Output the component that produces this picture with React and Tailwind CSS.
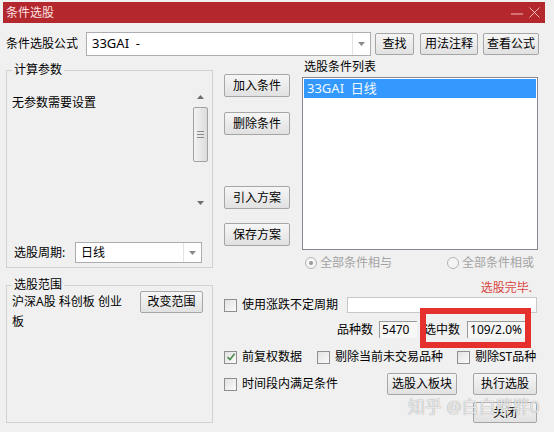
import React from 'react';

const Btn = ({ children, className = '' }) => (
  <button
    className={`flex items-center justify-center rounded-[2px] border border-[#a6a6a6] bg-gradient-to-b from-[#f6f6f6] to-[#e1e1e1] text-[12px] leading-none text-black ${className}`}
  >
    {children}
  </button>
);

const Check = ({ checked }) => (
  <span className="flex h-[13px] w-[13px] shrink-0 items-center justify-center border border-[#8f8f8f] bg-gradient-to-br from-[#e2e2e2] to-[#fbfbfb]">
    {checked && (
      <svg width="10" height="10" viewBox="0 0 10 10">
        <path d="M1.5 5.2 L4 7.6 L8.6 1.8" fill="none" stroke="#4b8a4b" strokeWidth="1.6" />
      </svg>
    )}
  </span>
);

const Radio = ({ on }) => (
  <span className="flex h-[12px] w-[12px] items-center justify-center rounded-full border border-[#b4b4b4] bg-[#f4f4f4]">
    {on && <span className="h-[4px] w-[4px] rounded-full bg-[#9a9a9a]" />}
  </span>
);

const Arrow = () => (
  <svg width="7" height="4" viewBox="0 0 7 4">
    <path d="M0 0 H7 L3.5 4 Z" fill="#8a8a8a" />
  </svg>
);

function App() {
  return (
    <div className="relative h-[432px] w-[554px] overflow-hidden bg-[#f0f0f0] font-['Noto_Sans','Noto_Sans_CJK_SC',sans-serif] text-[12px] text-black">
      {/* title bar */}
      <div className="ml-[3px] mt-[2px] flex h-[21px] w-[542px] items-center justify-between bg-[#b3272d] pl-[3px] pr-[5px] text-[#fbe3e3]">
        <span className="leading-none">条件选股</span>
        <div className="flex items-center gap-[6px]">
          <svg width="12" height="12" viewBox="0 0 12 12">
            <path d="M0 7 H12" stroke="#f3bcbc" strokeWidth="1" />
          </svg>
          <svg width="11" height="11" viewBox="0 0 11 11">
            <path d="M0.5 0.5 L10.5 10.5 M10.5 0.5 L0.5 10.5" stroke="#f3bcbc" strokeWidth="1" />
          </svg>
        </div>
      </div>

      {/* formula row */}
      <div className="mt-[9px] flex h-[24px] items-center">
        <span className="w-[86px] pl-[6px]">条件选股公式</span>
        <div className="flex h-[24px] w-[285px] items-center border border-[#abadb3] bg-white">
          <span className="flex-1 pl-[5px] text-[13px]">33GAI&nbsp;&nbsp;-</span>
          <span className="flex h-full w-[18px] items-center justify-center border-l border-[#e3e3e3]">
            <Arrow />
          </span>
        </div>
        <Btn className="ml-[4px] h-[22px] w-[39px]">查找</Btn>
        <Btn className="ml-[6px] h-[22px] w-[58px]">用法注释</Btn>
        <Btn className="ml-[5px] h-[22px] w-[56px]">查看公式</Btn>
      </div>

      <div className="mt-[4px] flex">
        {/* left column */}
        <div className="ml-[6px] w-[207px] pt-[3px]">
          <fieldset className="flex h-[205px] flex-col border border-[#d2d2d2]">
            <legend className="ml-[5px] px-[2px] leading-[14px]">计算参数</legend>
            <div className="mt-[11px] flex h-[122px]">
              <div className="flex-1 pl-[5px] pt-[7px] leading-[16px]">无参数需要设置</div>
              <div className="mr-[4px] flex w-[15px] flex-col items-center">
                <div className="flex h-[18px] items-center">
                  <svg width="7" height="4" viewBox="0 0 7 4">
                    <path d="M0 4 H7 L3.5 0 Z" fill="#6f6f6f" />
                  </svg>
                </div>
                <div className="mt-[1px] flex h-[55px] w-[15px] flex-col items-center justify-center gap-[2px] rounded-[2px] border border-[#a2a2a2] bg-gradient-to-r from-[#f3f3f3] to-[#dcdcdc]">
                  <span className="h-px w-[7px] bg-[#8a8a8a]" />
                  <span className="h-px w-[7px] bg-[#8a8a8a]" />
                  <span className="h-px w-[7px] bg-[#8a8a8a]" />
                </div>
                <div className="flex-1" />
                <div className="flex h-[14px] items-center">
                  <svg width="7" height="4" viewBox="0 0 7 4">
                    <path d="M0 0 H7 L3.5 4 Z" fill="#6f6f6f" />
                  </svg>
                </div>
              </div>
            </div>
            <div className="mt-[32px] flex h-[21px] items-center">
              <span className="w-[68px] pl-[7px]">选股周期:</span>
              <div className="flex h-[21px] w-[127px] items-center border border-[#abadb3] bg-white">
                <span className="flex-1 pl-[5px]">日线</span>
                <span className="flex h-full w-[18px] items-center justify-center border-l border-[#e3e3e3]">
                  <Arrow />
                </span>
              </div>
            </div>
          </fieldset>

          <fieldset className="mt-[10px] h-[145px] border border-[#d2d2d2]">
            <legend className="ml-[5px] px-[2px] leading-[14px]">选股范围</legend>
            <div className="flex items-start">
              <div className="w-[128px] pl-[5px] leading-[20px]">
                沪深A股 科创板 创业
                <br />板
              </div>
              <Btn className="ml-[5px] mt-[-1px] h-[22px] w-[63px]">改变范围</Btn>
            </div>
          </fieldset>
        </div>

        {/* right area */}
        <div className="ml-[11px] w-[314px]">
          <div className="flex h-[190px]">
            <div className="flex w-[66px] flex-col">
              <Btn className="mt-[14px] h-[23px] w-[66px]">加入条件</Btn>
              <Btn className="mt-[15px] h-[23px] w-[66px]">删除条件</Btn>
              <Btn className="mt-[51px] h-[23px] w-[66px]">引入方案</Btn>
              <Btn className="mt-[14px] h-[23px] w-[66px]">保存方案</Btn>
            </div>
            <div className="ml-[12px] w-[236px]">
              <div className="pl-[2px] leading-[14px]">选股条件列表</div>
              <div className="mt-[3px] h-[173px] border border-[#828790] bg-white p-[1px]">
                <div className="h-[19px] bg-[#3399ff] pl-[3px] text-[13px] leading-[19px] text-[#f2f8ff]">
                  33GAI&nbsp;&nbsp;日线
                </div>
              </div>
            </div>
          </div>

          <div className="mt-[5px] flex h-[16px] items-center pl-[81px] text-[#a3a3a3]">
            <div className="flex w-[142px] items-center gap-[3px]">
              <Radio on />
              <span>全部条件相与</span>
            </div>
            <div className="flex items-center gap-[3px]">
              <Radio />
              <span>全部条件相或</span>
            </div>
          </div>

          <div className="mt-[10px] h-[14px] pr-[6px] text-right leading-[14px] text-[#d8453d]">选股完毕.</div>

          <div className="mt-[2px] flex h-[16px] items-center">
            <Check />
            <span className="ml-[5px]">使用涨跌不定周期</span>
            <span className="ml-auto mr-px h-[16px] w-[190px] border border-[#c8c8c8] bg-white" />
          </div>

          <div className="mt-[8px] flex h-[17px] items-center pl-[113px]">
            <span>品种数</span>
            <span className="ml-[6px] h-[17px] w-[38px] border-l border-t border-[#9a9a9a] bg-[#f7f7f7] pl-[2px] leading-[16px]">5470</span>
            <span className="ml-[7px]">选中数</span>
            <span className="ml-[7px] h-[17px] w-[58px] border-l border-t border-[#9a9a9a] bg-[#f7f7f7] pl-[2px] leading-[16px]">109/2.0%</span>
          </div>

          <div className="mt-[11px] flex h-[16px] items-center">
            <div className="flex w-[93px] items-center gap-[5px]">
              <Check checked />
              <span>前复权数据</span>
            </div>
            <div className="flex w-[140px] items-center gap-[5px]">
              <Check />
              <span>剔除当前未交易品种</span>
            </div>
            <div className="flex items-center gap-[5px]">
              <Check />
              <span>剔除ST品种</span>
            </div>
          </div>

          <div className="mt-[8px] flex h-[22px] items-center">
            <div className="flex w-[163px] items-center gap-[5px]">
              <Check />
              <span>时间段内满足条件</span>
            </div>
            <Btn className="h-[22px] w-[70px]">选股入板块</Btn>
            <Btn className="ml-[16px] h-[22px] w-[64px]">执行选股</Btn>
          </div>

          <Btn className="ml-[249px] mt-[7px] h-[21px] w-[64px]">关闭</Btn>
        </div>
      </div>

      {/* annotation box */}
      <div className="absolute left-[420px] top-[308px] h-[40px] w-[111px] border-[6px] border-[#e5302e]" />

      {/* watermark */}
      <div className="absolute left-[408px] top-[396px] text-[17px] leading-[22px] text-white/80 [text-shadow:0_0_1px_#7a7a7a]">
        知乎 @白白胖胖0
      </div>
    </div>
  );
}

export default App;
